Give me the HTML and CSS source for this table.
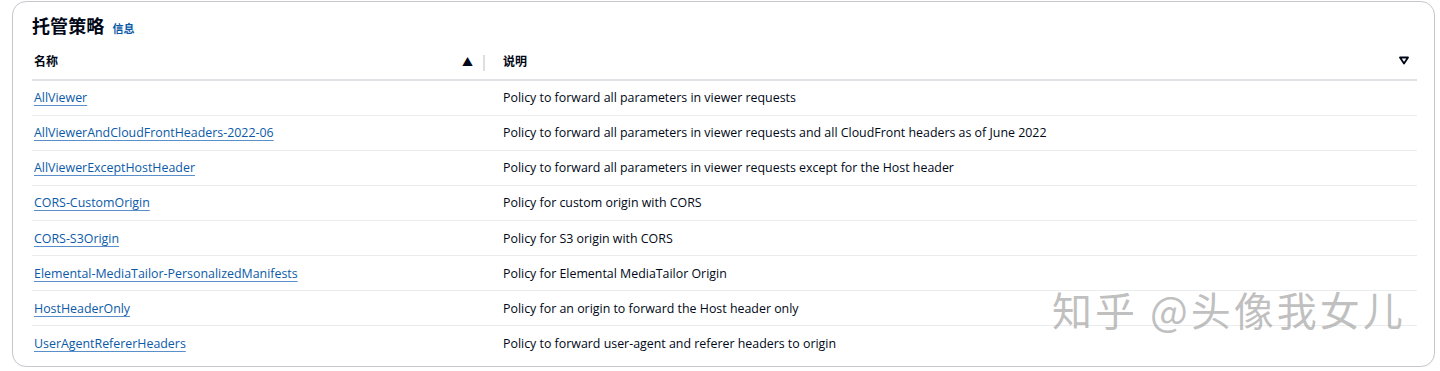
FILE: index.html
```html
<!DOCTYPE html>
<html lang="zh">
<head>
<meta charset="utf-8">
<link rel="stylesheet" href="styles.css">
</head>
<body>
<div class="card">
  <div class="title-row">
    <h2 class="title">托管策略</h2>
    <a class="info">信息</a>
  </div>
  <table class="tbl">
    <thead>
      <tr>
        <th class="col-name"><div class="th-inner"><span>名称</span><span class="sort">▲</span></div></th>
        <th class="col-desc"><div class="th-inner"><span>说明</span><svg class="filter" width="10" height="9" viewBox="0 0 10 9"><path d="M1 1.5 H9 L5 7.5 Z" fill="none" stroke="#000716" stroke-width="1.8" stroke-linejoin="round"/></svg></div></th>
      </tr>
    </thead>
    <tbody>
      <tr><td><a class="lnk">AllViewer</a></td><td>Policy to forward all parameters in viewer requests</td></tr>
      <tr><td><a class="lnk">AllViewerAndCloudFrontHeaders-2022-06</a></td><td>Policy to forward all parameters in viewer requests and all CloudFront headers as of June 2022</td></tr>
      <tr><td><a class="lnk">AllViewerExceptHostHeader</a></td><td>Policy to forward all parameters in viewer requests except for the Host header</td></tr>
      <tr><td><a class="lnk">CORS-CustomOrigin</a></td><td>Policy for custom origin with CORS</td></tr>
      <tr><td><a class="lnk">CORS-S3Origin</a></td><td>Policy for S3 origin with CORS</td></tr>
      <tr><td><a class="lnk">Elemental-MediaTailor-PersonalizedManifests</a></td><td>Policy for Elemental MediaTailor Origin</td></tr>
      <tr><td><a class="lnk">HostHeaderOnly</a></td><td>Policy for an origin to forward the Host header only</td></tr>
      <tr class="last"><td><a class="lnk">UserAgentRefererHeaders</a></td><td>Policy to forward user-agent and referer headers to origin</td></tr>
    </tbody>
  </table>
  <div class="watermark">知乎 @头像我女儿</div>
</div>
</body>
</html>
```
FILE: styles.css
```css
* { box-sizing: border-box; }
html, body { margin: 0; padding: 0; background: #fff; }
body {
  font-family: "Open Sans", "Noto Sans", "Noto Sans CJK SC", sans-serif;
  color: #000716;
  padding: 1px 5px 0 12px;
}
.card {
  position: relative;
  border: 1px solid #c6c6cd;
  border-radius: 14px;
  height: 366px;
  padding: 10px 19px 0 19px;
  box-shadow: 0 1px 1px rgba(0,0,0,0.04);
}
.title-row {
  display: flex;
  align-items: baseline;
  gap: 8px;
  height: 30px;
}
.title {
  margin: 0;
  font-family: "Noto Sans CJK SC", sans-serif;
  font-size: 18px;
  font-weight: 700;
  letter-spacing: 0.1px;
}
.info {
  font-family: "Noto Sans CJK SC", sans-serif;
  font-size: 11px;
  font-weight: 700;
  color: #0b5aa8;
}
.tbl {
  width: 1385px;
  border-collapse: collapse;
  font-size: 12.4px;
}
.tbl th {
  font-family: "Noto Sans CJK SC", sans-serif;
  font-size: 12px;
  font-weight: 700;
  text-align: left;
  height: 38px;
  padding: 0;
  border-bottom: 2px solid #dfe1e4;
}
.th-inner {
  display: flex;
  align-items: center;
  justify-content: space-between;
  height: 100%;
}
.col-name { width: 453px; }
.col-name .th-inner {
  padding-left: 2px;
  padding-right: 12px;
  position: relative;
}
.col-name .th-inner::after {
  content: "";
  position: absolute;
  right: 0;
  top: 13px;
  width: 2px;
  height: 16px;
  background: #dcdee1;
}
.sort { font-size: 11px; }
.col-desc .th-inner {
  padding-left: 18px;
  padding-right: 8px;
}
.tbl td {
  height: 35.15px;
  padding: 0 0 0 2px;
  border-bottom: 1px solid #eaecee;
  vertical-align: middle;
}
.tbl td + td { padding-left: 18px; }
.tbl tr.last td { border-bottom: none; }
.lnk {
  color: #0b5aa8;
  text-decoration: underline;
  text-decoration-color: #5b8fc9;
  text-underline-offset: 3px;
  text-decoration-thickness: 1px;
}
.watermark {
  position: absolute;
  left: 1039px;
  top: 278px;
  font-family: "Noto Sans CJK SC", sans-serif;
  font-size: 40px;
  letter-spacing: 3px;
  color: rgba(150,150,150,0.6);
  white-space: nowrap;
}
```
